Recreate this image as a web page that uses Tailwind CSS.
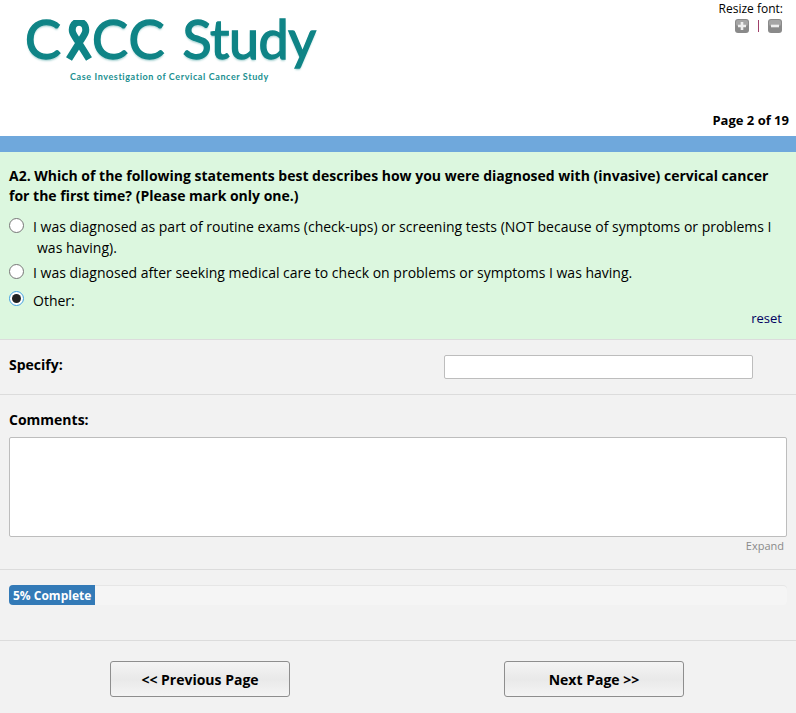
<!DOCTYPE html>
<html lang="en">
<head>
    <meta charset="UTF-8">
    <meta name="viewport" content="width=device-width, initial-scale=1.0">
    <title>CICC Study</title>
    <script src="https://cdn.jsdelivr.net/npm/@tailwindcss/browser@4"></script>
</head>
<body class="bg-[#f2f2f2] font-['Open_Sans',sans-serif] text-[14px] text-black overflow-hidden">
    <!-- header -->
    <div class="h-[136px] bg-white relative">
        <div class="flex flex-col items-start pl-[25px] pt-[8px]">
            <div class="flex items-center h-[62px] text-[#0f8486] font-['Lato',sans-serif] text-[54px] leading-[62px] [-webkit-text-stroke:1.4px_#0f8486] [text-shadow:0_2px_2px_#a9d3d3]">
                <span class="tracking-[2px]">C</span>
                <svg class="w-[28px] h-[41px] mt-[2px] ml-[2px] -mr-[1px]" viewBox="0 0 28 41" fill="none">
                    <path d="M4 39 L16 20 C20 14 22 11 20 6 C18 1 10 1 8 6 C6 11 8 14 12 20 L24 39" stroke="#0f8486" stroke-width="7"/>
                </svg>
                <span class="tracking-[1px]">CC</span>
                <span class="ml-[17px] tracking-[-0.5px]">Study</span>
            </div>
            <div class="ml-[45px] mt-[1px] text-[9px] leading-[12px] font-bold text-[#1a8f90] font-['Lato',sans-serif] tracking-[0.6px]">Case Investigation of Cervical Cancer Study</div>
        </div>
        <div class="absolute top-[1px] right-[13px] flex flex-col items-end">
            <div class="text-[12px] leading-[16px]">Resize font:</div>
            <div class="flex items-center gap-[9px] h-[16px] mt-[1px] mr-[1px]">
                <svg class="w-[14px] h-[14px]" viewBox="0 0 14 14"><rect width="14" height="14" rx="3" fill="#8a8a8a"/><rect x="1" y="1" width="12" height="6" rx="2" fill="#a5a5a5"/><path d="M7 3v8M3 7h8" stroke="#eee" stroke-width="2.6"/></svg>
                <div class="w-px h-[12px] bg-[#a0406a]"></div>
                <svg class="w-[14px] h-[14px]" viewBox="0 0 14 14"><rect width="14" height="14" rx="3" fill="#8a8a8a"/><rect x="1" y="1" width="12" height="6" rx="2" fill="#a5a5a5"/><path d="M3 7h8" stroke="#eee" stroke-width="2.6"/></svg>
            </div>
        </div>
        <div class="absolute right-[7px] top-[111px] font-bold text-[13px] leading-[18px]">Page 2 of 19</div>
    </div>
    <div class="h-[16px] bg-[#6fa8dc]"></div>

    <!-- question -->
    <div class="h-[188px] bg-[#dcf7df] border-b border-[#dcdcdc] pl-[9px] pr-[14px] pt-[14px] relative">
        <div class="font-bold leading-[20px]">A2. Which of the following statements best describes how you were diagnosed with (invasive) cervical cancer<br>for the first time? (Please mark only one.)</div>
        <div class="mt-[10px] leading-[21px]">
            <div class="flex items-start">
                <span class="mt-[2px] w-[15px] h-[15px] rounded-full bg-white border border-[#767676] shrink-0"></span>
                <div class="pl-[9px]"><div>I was diagnosed as part of routine exams (check-ups) or screening tests (NOT because of symptoms or problems I</div><div class="pl-[4px]">was having).</div></div>
            </div>
            <div class="flex items-start mt-[4px]">
                <span class="mt-[2px] w-[15px] h-[15px] rounded-full bg-white border border-[#767676] shrink-0"></span>
                <div class="pl-[9px]">I was diagnosed after seeking medical care to check on problems or symptoms I was having.</div>
            </div>
            <div class="flex items-start mt-[7px]">
                <span class="mt-[1px] w-[15px] h-[15px] rounded-full bg-white border border-[#3f9fe0] shrink-0 flex items-center justify-center"><span class="w-[9px] h-[9px] rounded-full bg-[#222]"></span></span>
                <div class="pl-[9px]">Other:</div>
            </div>
        </div>
        <div class="absolute right-[14px] top-[157px] text-[13px] leading-[18px] text-[#000060]">reset</div>
    </div>

    <!-- specify -->
    <div class="h-[55px] border-b border-[#dcdcdc] pl-[9px] pt-[15px] relative">
        <div class="font-bold leading-[20px]">Specify:</div>
        <input type="text" class="absolute left-[444px] top-[15px] w-[309px] h-[24px] bg-white border border-[#bdbdbd] rounded-[2px]">
    </div>

    <!-- comments -->
    <div class="h-[175px] border-b border-[#dcdcdc] pl-[9px] pr-[9px] pt-[15px]">
        <div class="font-bold leading-[20px]">Comments:</div>
        <textarea class="block mt-[7px] w-[778px] h-[100px] bg-white border border-[#bdbdbd] rounded-[2px] resize-none"></textarea>
        <div class="text-right pr-[3px] mt-[1px] text-[11px] leading-[16px] text-[#8a8a8a]">Expand</div>
    </div>

    <!-- progress -->
    <div class="h-[71px] border-b border-[#dcdcdc] pl-[9px] pr-[9px] pt-[15px]">
        <div class="h-[20px] w-[778px] rounded-[4px] shadow-[inset_0_1px_0_#e6e6e6] bg-[#f5f5f5] overflow-hidden">
            <div class="h-[20px] w-[86px] bg-[#337ab7] text-white font-bold text-[12px] leading-[21px] pl-[4px]">5% Complete</div>
        </div>
    </div>

    <!-- buttons -->
    <div class="flex pt-[20px] pl-[110px] gap-[214px]">
        <button class="w-[180px] h-[36px] rounded-[3px] border border-[#8e8e8e] bg-gradient-to-b from-[#f4f4f4] via-[#e9e9e9] to-[#f4f4f4] font-bold">&lt;&lt; Previous Page</button>
        <button class="w-[180px] h-[36px] rounded-[3px] border border-[#8e8e8e] bg-gradient-to-b from-[#f4f4f4] via-[#e9e9e9] to-[#f4f4f4] font-bold">Next Page &gt;&gt;</button>
    </div>
</body>
</html>
